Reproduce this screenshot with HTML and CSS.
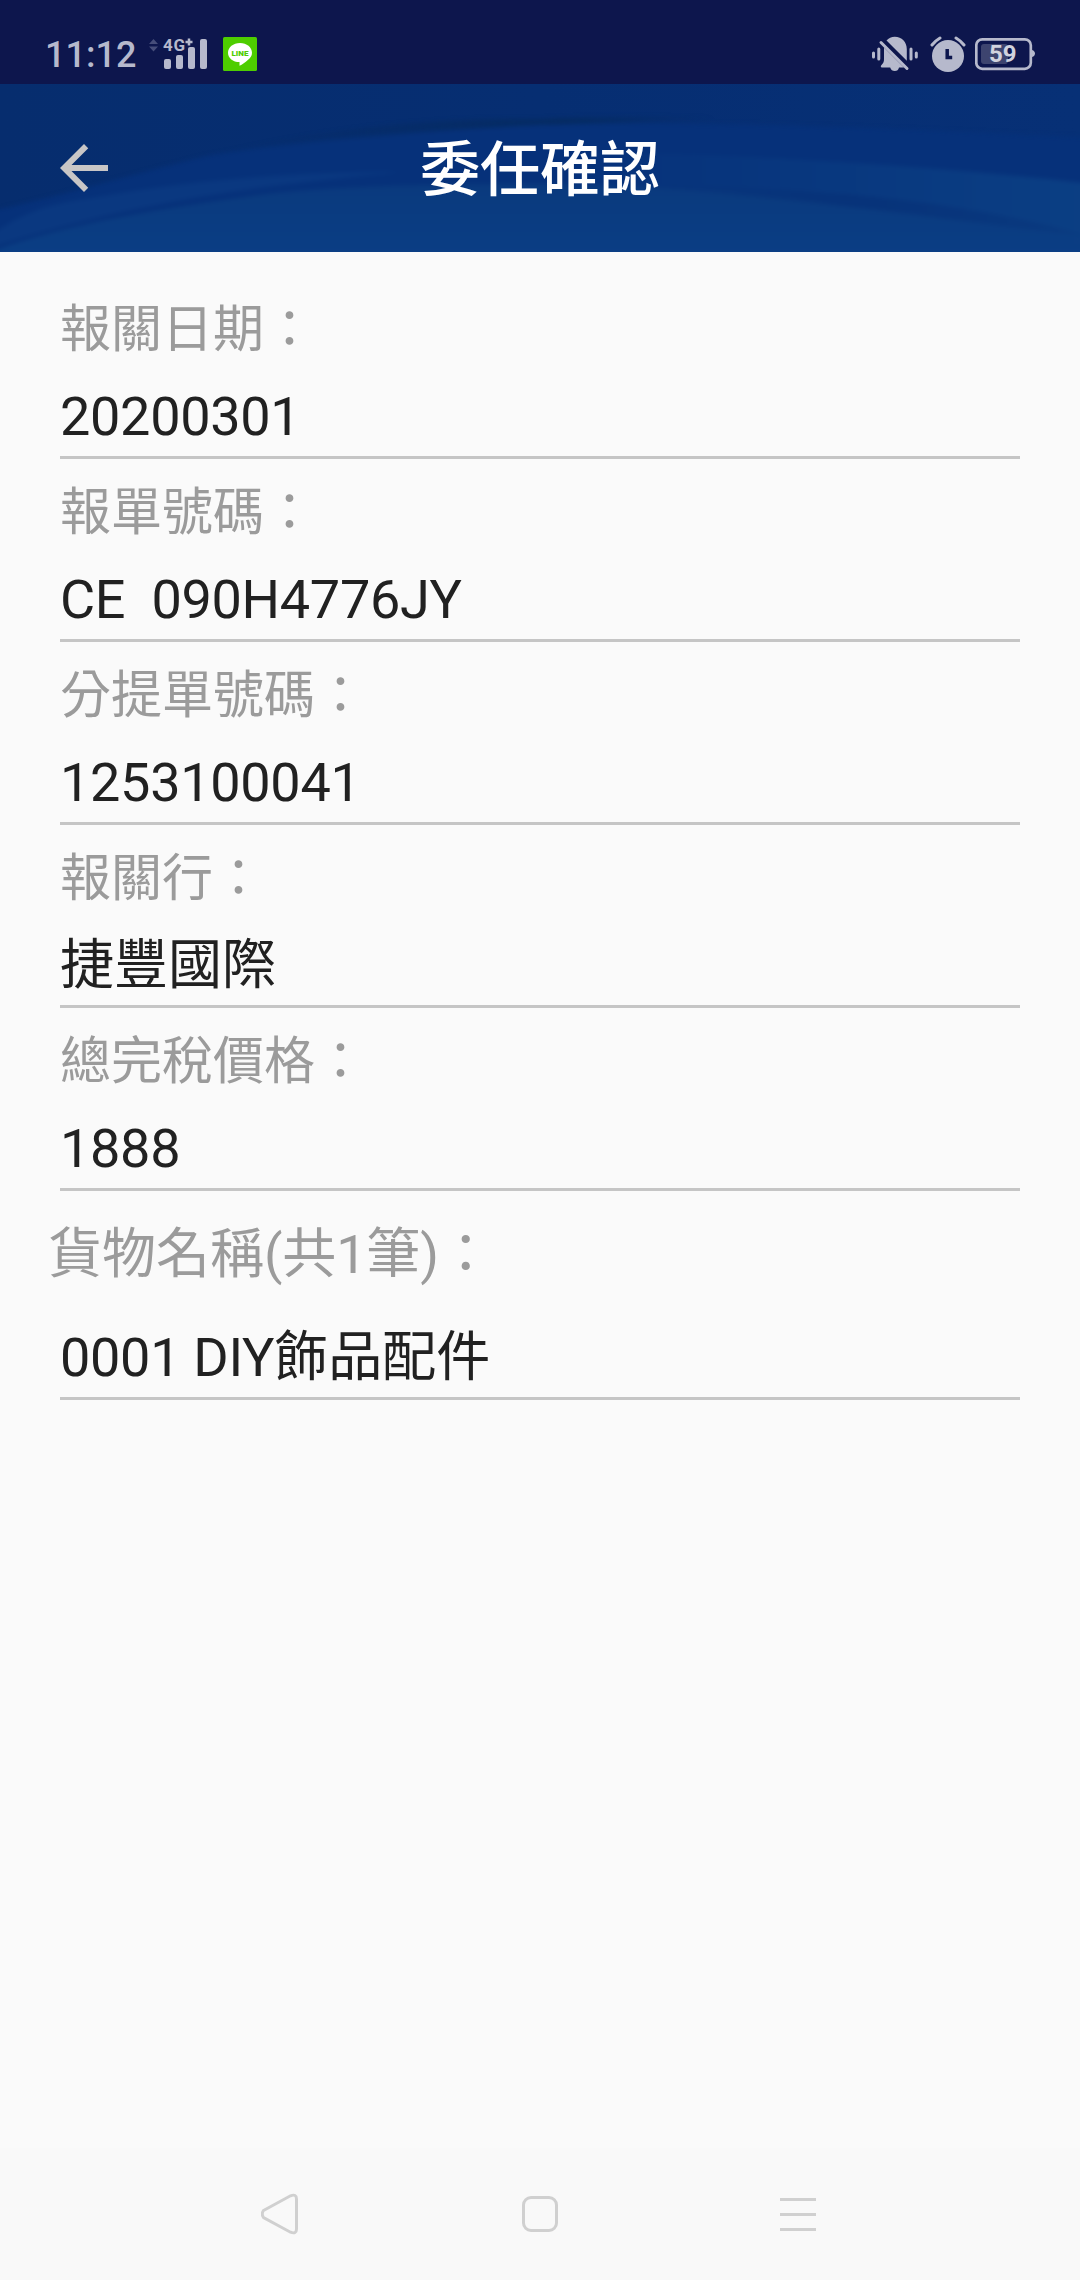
FILE: index.html
```html
<!DOCTYPE html>
<html lang="zh-TW">

<head>
    <meta charset="UTF-8">
    <meta name="viewport" content="width=device-width, initial-scale=1.0">
    <title>委任確認</title>
    <link rel="stylesheet" href="styles.css">
</head>

<body>
    <div class="status-bar">
        <span class="time">11:12</span>
        <svg class="signal" width="60" height="36" viewBox="148 36 60 36">
            <path class="dim" d="M149 44l4.500-5 4.500 5zM149 46.500h9l-4.500 5z" />
            <text class="network" x="163" y="51" textLength="22">4G</text>
            <path class="thin" d="M189 38.500v7M185.500 42h7" />
            <rect x="164" y="59" width="7" height="10" rx="2" />
            <rect x="176" y="55" width="7" height="14" rx="2" />
            <rect x="188" y="47" width="7" height="22" rx="2" />
            <rect x="200" y="39" width="7" height="30" rx="2" />
        </svg>
        <svg class="line-app" width="34" height="34" viewBox="0 0 34 34">
            <rect class="line-bg" width="34" height="34" rx="1.500" />
            <path class="line-bubble" d="M17 6c6.800 0 12 4.300 12 9.700 0 3-1.600 5.300-4.200 7.300-2.500 2.200-5.500 4.500-8.300 5.800v-3.700C10 25 5 21.200 5 15.700 5 10.300 10.200 6 17 6z" />
            <text class="line-text" x="8.500" y="18.700" textLength="17" lengthAdjust="spacingAndGlyphs">LINE</text>
        </svg>
        <div class="status-right">
            <svg width="46" height="36" viewBox="872 36 46 36">
                <path d="M886.500 40.500c2-2.200 5-3.700 8.300-3.700 7 0 12 5 12 12.500v11.500zM884 47.500L904 67.500h-5c-.5 2.500-2 3.500-4.200 3.500s-4-1-4.600-3.500H882c-1.500 0-1.500-1.500-.5-2.500 2-2 2.500-3.500 2.500-6z" />
                <path class="stroke" d="M881 42.500l26 26M873.500 53v4M878.800 49v10M911 49v10M916.300 53v4" />
            </svg>
            <svg width="36" height="37" viewBox="930 35 36 37">
                <circle cx="948" cy="55" r="16" />
                <path class="stroke" d="M932 44q3-4 8-7M964 44q-3-4-8-7" />
                <path class="hands" d="M947.200 48v8.500h5" />
            </svg>
            <svg class="battery" width="61" height="34" viewBox="975 37 61 34">
                <rect class="frame" x="976.300" y="39.300" width="54.500" height="29.500" rx="6" />
                <path d="M1032 50c4 1 4 6 0 7z" />
                <rect class="level" x="981" y="44" width="27" height="20" rx="3" />
                <text class="percent" x="989" y="62">59</text>
            </svg>
        </div>
    </div>

    <div class="header">
        <svg class="waves" viewBox="0 0 1080 168" preserveAspectRatio="none">
            <defs>
                <linearGradient id="sky" x1="0" y1="0" x2="1" y2="0">
                    <stop offset="0" stop-color="#062d6e" />
                    <stop offset="0.500" stop-color="#062e72" />
                    <stop offset="1" stop-color="#073076" />
                </linearGradient>
                <linearGradient id="streak" x1="0" y1="0" x2="1" y2="0">
                    <stop offset="0" stop-color="#062b63" stop-opacity="0" />
                    <stop offset="0.700" stop-color="#052b62" />
                    <stop offset="1" stop-color="#052b62" stop-opacity="0" />
                </linearGradient>
                <linearGradient id="sea" x1="0" y1="0" x2="0" y2="1">
                    <stop offset="0" stop-color="#0a3a7e" />
                    <stop offset="1" stop-color="#0b3f86" />
                </linearGradient>
                <linearGradient id="right" x1="0" y1="0" x2="1" y2="0">
                    <stop offset="0" stop-color="#0b3f84" stop-opacity="0" />
                    <stop offset="1" stop-color="#0b3f84" />
                </linearGradient>
                <linearGradient id="trail" x1="0" y1="0" x2="1" y2="0">
                    <stop offset="0" stop-color="#073279" stop-opacity="0" />
                    <stop offset="0.500" stop-color="#073279" stop-opacity="0.900" />
                    <stop offset="1" stop-color="#073279" stop-opacity="0.300" />
                </linearGradient>
                <filter id="soft" color-interpolation-filters="sRGB">
                    <feGaussianBlur stdDeviation="2" />
                </filter>
            </defs>
            <rect width="1080" height="168" fill="url(#sky)" />
            <g filter="url(#soft)">
                <path d="M-20 130C60 112 100 99 207 72C310 52 430 44 540 41C720 36 900 45 1100 54V190H-20z" fill="#06317a" />
                <path d="M200 74C320 44 430 34 540 35C620 32 680 34 720 34C640 38 600 40 540 41C430 46 310 57 200 74z" fill="url(#streak)" />
                <path d="M-10 152C30 122 60 119 103 112C180 98 280 88 400 88C300 98 150 112 -10 164z" fill="#0a3880" />
                <path d="M560 69C660 67 900 77 1100 101V190H560z" fill="url(#right)" />
                <path d="M-10 168C69 138 172 123 275 109C360 101 450 100 540 100C680 101 781 112 939 130C1000 138 1050 150 1100 160V190H-10z" fill="url(#sea)" />
                <path d="M600 98C760 101 880 112 940 121C1000 130 1050 140 1090 153C1000 143 800 112 600 101z" fill="url(#trail)" />
            </g>
        </svg>
        <div class="toolbar">
            <svg class="back" width="72" height="72" viewBox="0 0 24 24">
                <path d="M20 11H7.830l5.590-5.590L12 4l-8 8 8 8 1.410-1.410L7.830 13H20v-2z" />
            </svg>
            <h1>委任確認</h1>
        </div>
    </div>

    <div class="content">
        <div class="field">
            <div class="label">報關日期：</div>
            <div class="value"><span class="latin">20200301</span></div>
        </div>
        <div class="field">
            <div class="label">報單號碼：</div>
            <div class="value"><span class="latin">CE  090H4776JY</span></div>
        </div>
        <div class="field">
            <div class="label">分提單號碼：</div>
            <div class="value"><span class="latin">1253100041</span></div>
        </div>
        <div class="field">
            <div class="label">報關行：</div>
            <div class="value">捷豐國際</div>
        </div>
        <div class="field">
            <div class="label">總完稅價格：</div>
            <div class="value"><span class="latin">1888</span></div>
        </div>
        <div class="goods-title">貨物名稱<span class="latin">(</span>共<span class="latin">1</span>筆<span class="latin">)</span>：</div>
        <div class="field">
            <div class="value"><span class="latin">0001 DIY</span>飾品配件</div>
        </div>
    </div>

    <div class="nav-bar">
        <svg width="38" height="42" viewBox="261 2193 38 42">
            <path d="M263.500 2210.500L290.500 2195.800Q296.500 2193.500 296.500 2199V2229Q296.500 2234.500 290.500 2232.200L263.500 2217.500Q261 2214 263.500 2210.500z" />
        </svg>
        <svg width="36" height="36" viewBox="0 0 36 36">
            <rect x="1.500" y="1.500" width="33" height="33" rx="7.500" />
        </svg>
        <svg width="36" height="36" viewBox="0 0 36 36">
            <path d="M0 3.500h36M0 18.500h36M0 33.500h36" />
        </svg>
    </div>
</body>

</html>
```
FILE: styles.css
```css
body {
    margin: 0;
    width: 1080px;
    height: 2280px;
    display: flex;
    flex-direction: column;
    background: #FAFAFA;
    color: #212121;
    font-family: Roboto, "Noto Sans CJK TC", sans-serif;
}

svg {
    display: block;
    flex: none;
}

.status-bar {
    box-sizing: border-box;
    height: 84px;
    padding: 24px 44px 0 45px;
    display: flex;
    align-items: center;
    background: #0D164D;
    color: #B6B9CC;
    fill: #B6B9CC;
}

.time {
    width: 103px;
    padding-top: 2px;
    font-size: 36px;
    font-weight: 500;
    line-height: 58px;
}

.dim {
    fill: #464D7A;
}

.network {
    font-size: 17px;
    font-weight: 700;
}

.thin {
    fill: none;
    stroke: #B6B9CC;
    stroke-width: 2.5;
}

.line-app {
    margin-left: 15px;
}

.line-bg {
    fill: #4ECD00;
}

.line-bubble {
    fill: #FFF;
}

.line-text {
    fill: #4ECD00;
    font-size: 8px;
    font-weight: 900;
}

.status-right {
    display: flex;
    align-items: center;
    margin-left: auto;
}

.status-right svg + svg {
    margin-left: 12px;
}

.status-right .battery {
    margin-left: 9px;
}

.stroke {
    fill: none;
    stroke: #B6B9CC;
    stroke-width: 3;
    stroke-linecap: round;
}

.hands {
    fill: none;
    stroke: #0D164D;
    stroke-width: 3.5;
}

.frame {
    fill: none;
    stroke: #B6B9CC;
    stroke-width: 2.7;
}

.level {
    fill: #3D446F;
}

.percent {
    font-size: 24px;
    font-weight: 700;
    fill: #D0D2DE;
}

.header {
    height: 168px;
    display: grid;
    overflow: hidden;
}

.waves,
.toolbar {
    grid-area: 1 / 1;
    width: 1080px;
    height: 168px;
}

.toolbar {
    z-index: 1;
    box-sizing: border-box;
    padding: 0 48px;
    display: grid;
    grid-template-columns: 72px 1fr 72px;
    align-items: center;
}

.back {
    fill: #C8C6C6;
}

h1 {
    margin: 0;
    padding-top: 5px;
    color: #FFF;
    font-size: 60px;
    font-weight: 500;
    line-height: 84px;
    text-align: center;
}

.content {
    flex: 1;
    padding: 24px 60px 0;
}

.field {
    border-bottom: 3px solid #C5C5C5;
}

.label {
    padding-top: 6px;
    font-size: 51px;
    line-height: 96px;
    color: #9B9B9B;
}

.value {
    font-size: 54px;
    line-height: 78px;
    white-space: pre;
}

.latin {
    letter-spacing: -0.3px;
}

.goods-title {
    margin-left: -12px;
    padding: 14px 0;
    font-size: 54px;
    line-height: 100px;
    color: #9B9B9B;
}

.nav-bar {
    height: 132px;
    padding: 0 264px 0 261px;
    display: flex;
    align-items: center;
    justify-content: space-between;
    background: #F9F9F9;
    fill: none;
    stroke: #D0D0D0;
    stroke-width: 3;
}
```
